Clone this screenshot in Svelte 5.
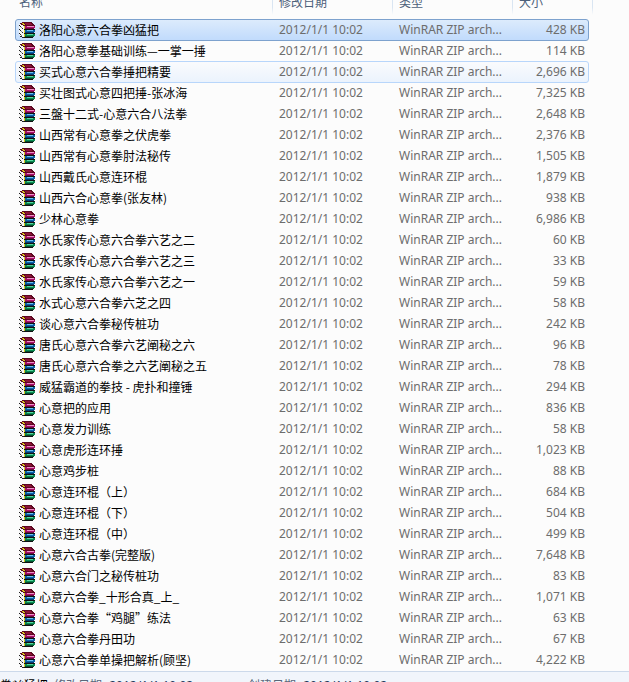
<script lang="ts">
	type Entry = { name: string; size: string; state?: 'selected' | 'hovered' };

	const modified = '2012/1/1 10:02';
	const kind = 'WinRAR ZIP arch...';

	const entries: Entry[] = [
		{ name: '洛阳心意六合拳凶猛把', size: '428 KB', state: 'selected' },
		{ name: '洛阳心意拳基础训练—一掌一捶', size: '114 KB' },
		{ name: '买式心意六合拳捶把精要', size: '2,696 KB', state: 'hovered' },
		{ name: '买壮图式心意四把捶-张冰海', size: '7,325 KB' },
		{ name: '三盤十二式-心意六合八法拳', size: '2,648 KB' },
		{ name: '山西常有心意拳之伏虎拳', size: '2,376 KB' },
		{ name: '山西常有心意拳肘法秘传', size: '1,505 KB' },
		{ name: '山西戴氏心意连环棍', size: '1,879 KB' },
		{ name: '山西六合心意拳(张友林)', size: '938 KB' },
		{ name: '少林心意拳', size: '6,986 KB' },
		{ name: '水氏家传心意六合拳六艺之二', size: '60 KB' },
		{ name: '水氏家传心意六合拳六艺之三', size: '33 KB' },
		{ name: '水氏家传心意六合拳六艺之一', size: '59 KB' },
		{ name: '水式心意六合拳六芝之四', size: '58 KB' },
		{ name: '谈心意六合拳秘传桩功', size: '242 KB' },
		{ name: '唐氏心意六合拳六艺阐秘之六', size: '96 KB' },
		{ name: '唐氏心意六合拳之六艺阐秘之五', size: '78 KB' },
		{ name: '威猛霸道的拳技 - 虎扑和撞锤', size: '294 KB' },
		{ name: '心意把的应用', size: '836 KB' },
		{ name: '心意发力训练', size: '58 KB' },
		{ name: '心意虎形连环捶', size: '1,023 KB' },
		{ name: '心意鸡步桩', size: '88 KB' },
		{ name: '心意连环棍（上）', size: '684 KB' },
		{ name: '心意连环棍（下）', size: '504 KB' },
		{ name: '心意连环棍（中）', size: '499 KB' },
		{ name: '心意六合古拳(完整版)', size: '7,648 KB' },
		{ name: '心意六合门之秘传桩功', size: '83 KB' },
		{ name: '心意六合拳_十形合真_上_', size: '1,071 KB' },
		{ name: '心意六合拳“鸡腿”练法', size: '63 KB' },
		{ name: '心意六合拳丹田功', size: '67 KB' },
		{ name: '心意六合拳单操把解析(顾坚)', size: '4,222 KB' }
	];
</script>

{#snippet archiveIcon()}
	<svg class="icon" viewBox="0 0 16 16" shape-rendering="crispEdges" aria-hidden="true">
		<!-- page edges on the left -->
		<path fill="#f6f6f6" d="M0 2h2v1h2v1h1v11H3v-1H1v-1H0z" />
		<path fill="#222" d="M0 3h1v1H0zM1 4h1v1H1zM3 6h1v1H3zM0 7h1v1H0zM1 8h1v1H1zM3 10h1v1H3zM0 11h1v1H0zM1 12h1v1H1zM1 14h2v1H1zM3 15h2v1H3z" />
		<path fill="#8a8a8a" d="M2 5h1v1H2zM2 9h1v1H2zM2 13h1v1H2z" />
		<!-- top cover -->
		<path fill="#5c0820" d="M3 0h10v1h1v1h1v1h1v1H4V3H2V2H1V1h2z" />
		<path fill="#8d1238" d="M6 1h6v1h1v1H7V2H6z" />
		<path fill="#d8c81c" d="M3 1h2v1H3zM4 2h2v1H4z" />
		<!-- spines -->
		<path fill="#a80f68" d="M5 4h11v2H5z" />
		<path fill="#ee8fc8" d="M8 4h7v1H8z" />
		<path fill="#6b0a40" d="M5 6h10v1H5z" />
		<path fill="#111" d="M5 7h11v1H5z" />
		<path fill="#0a62a8" d="M5 8h11v2H5z" />
		<path fill="#6fc0f0" d="M8 8h6v1H8z" />
		<path fill="#063a72" d="M5 10h10v1H5z" />
		<path fill="#111" d="M5 11h11v1H5z" />
		<path fill="#0a8a50" d="M5 12h11v2H5z" />
		<path fill="#58d8a0" d="M8 12h6v1H8z" />
		<path fill="#064e2e" d="M5 14h10v1H5z" />
		<path fill="#111" d="M5 15h9v1H5z" />
		<path fill="#d8c81c" d="M5 4h1v3H5zM5 8h1v3H5zM5 12h1v3H5z" />
	</svg>
{/snippet}

<main class="explorer">
	<table>
		<thead>
			<tr>
				<th class="name">名称</th>
				<th class="date">修改日期</th>
				<th class="kind">类型</th>
				<th class="size">大小</th>
			</tr>
		</thead>
		<tbody>
			{#each entries as entry}
				<tr class={entry.state} aria-selected={entry.state === 'selected'}>
					<td class="name">
						<div class="file">
							{@render archiveIcon()}
							<span>{entry.name}</span>
						</div>
					</td>
					<td class="date">{modified}</td>
					<td class="kind">{kind}</td>
					<td class="size">{entry.size}</td>
				</tr>
			{/each}
		</tbody>
	</table>

	<footer class="details">
		<strong>拳凶猛把</strong>
		<dl>
			<dt>修改日期:</dt>
			<dd>{modified}</dd>
		</dl>
		<dl>
			<dt>创建日期:</dt>
			<dd>{modified}</dd>
		</dl>
	</footer>
</main>

<style>
	:global(body) {
		margin: 0;
	}

	.explorer {
		display: flex;
		flex-direction: column;
		height: 100vh;
		overflow: hidden;
		background: #fcfcfc;
		color: #6d6d6d;
		font: 12px/20px 'Noto Sans', 'Noto Sans CJK SC', sans-serif;
	}

	table {
		flex: none;
		isolation: isolate;
		table-layout: fixed;
		width: calc(100% - 51px);
		margin: 0 36px 1px 15px;
		border-spacing: 0;
	}

	th,
	td {
		padding: 0 0 0 6px;
		text-align: left;
		white-space: nowrap;
	}

	th {
		height: 19px;
		border-right: 1px solid;
		border-image: linear-gradient(#d9e5f2 40%, #fcfcfc 75%) 1;
		box-sizing: border-box;
		color: #4c607a;
		font-weight: 400;
		line-height: 6px;
		vertical-align: top;
	}

	td {
		height: 21px;
	}

	.name {
		padding-left: 4px;
	}

	.date,
	.kind {
		width: 120px;
		box-sizing: border-box;
	}

	.size {
		width: 80px;
		box-sizing: border-box;
	}

	td.size {
		padding-right: 8px;
		text-align: right;
	}

	tbody tr {
		position: relative;
	}

	.selected .name::before,
	.hovered .name::before {
		content: '';
		position: absolute;
		inset: 0 4px -1px 0;
		z-index: -1;
		border: 1px solid #b8d6fb;
		border-radius: 3px;
		background: linear-gradient(#fafbfd, #ebf3fd);
	}

	.selected .name::before {
		border-color: #7da2ce;
		background: linear-gradient(#dcebfc, #c1dbfc);
	}

	.file {
		display: flex;
		align-items: center;
		gap: 4px;
		color: #000;
		font-family: 'Noto Sans CJK SC', sans-serif;
	}

	.icon {
		flex: none;
		width: 16px;
		height: 16px;
	}

	.details {
		display: flex;
		flex: 1;
		gap: 6px;
		min-height: 0;
		padding-top: 4px;
		border-top: 1px solid #ccd9ea;
		background: #f1f5fb;
		color: #5a6779;
		white-space: nowrap;
	}

	strong {
		color: #000;
		font-weight: 400;
	}

	dl {
		display: flex;
		gap: 4px;
		width: 188px;
		margin: 0;
	}

	dd {
		margin: 0;
		color: #1e395b;
	}
</style>
